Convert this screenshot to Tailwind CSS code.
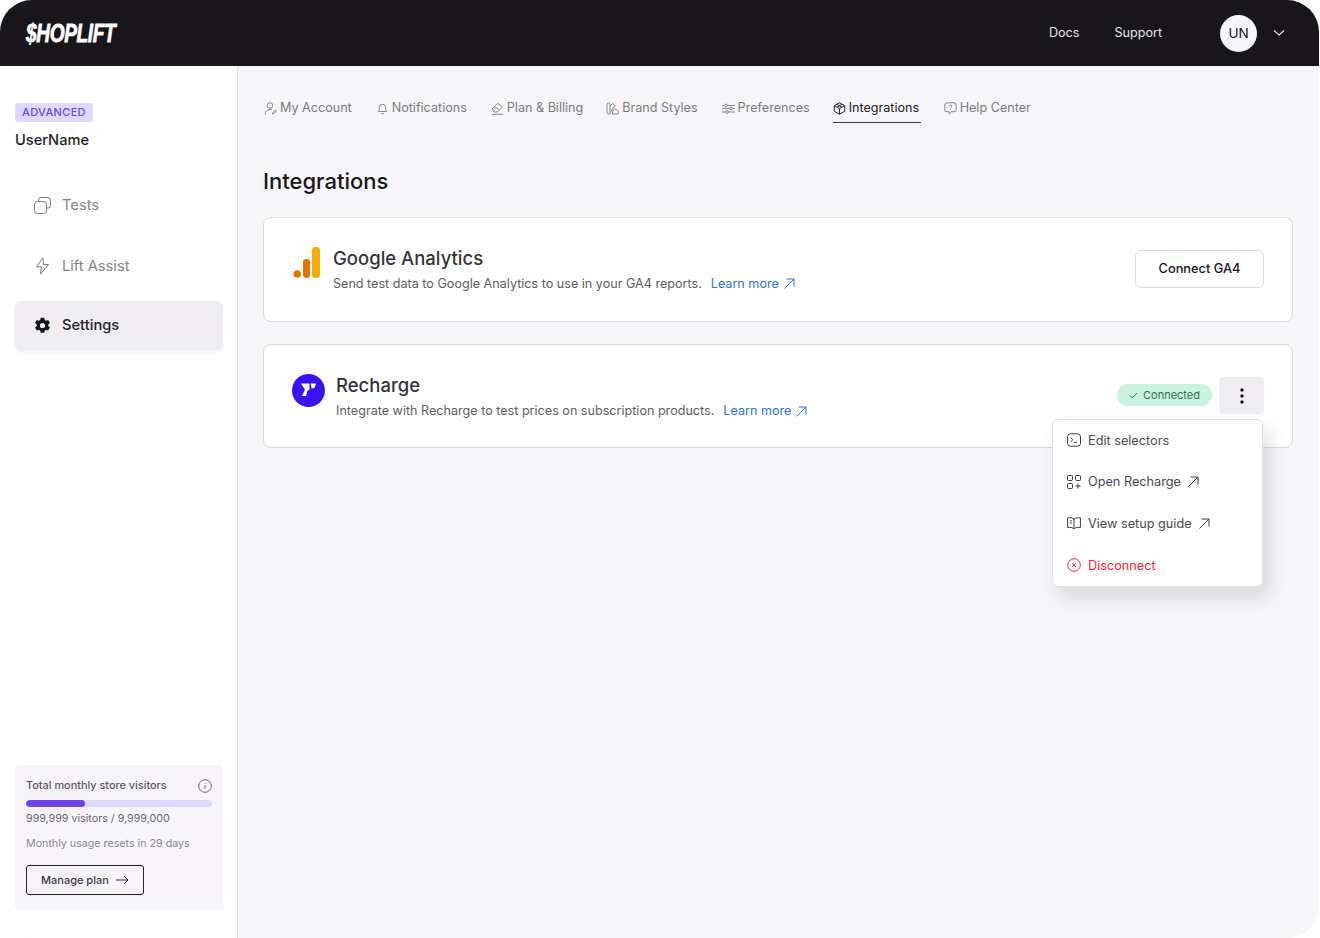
<!doctype html>
<html>
<head>
<meta charset="utf-8">
<script src="https://cdn.jsdelivr.net/npm/@tailwindcss/browser@4"></script>
</head>
<body class="bg-white font-['Inter',sans-serif] overflow-hidden">
<div class="w-[1319px] h-[938px] rounded-[32px] overflow-hidden flex flex-col bg-[#f6f5f8]">
  <header class="h-[66px] shrink-0 bg-[#18161a] flex items-center pl-[26px] pr-[34px]">
    <span class="text-white font-['Liberation_Sans',sans-serif] font-bold italic text-[26.500px] leading-none tracking-[-0.5px] origin-left scale-x-[0.72] w-[92px] whitespace-nowrap [-webkit-text-stroke:0.8px_white]">$HOPLIFT</span>
    <nav class="ml-auto flex items-center text-[12.600px] text-[#e6e4e9]">
      <span>Docs</span>
      <span class="ml-[35px]">Support</span>
    </nav>
    <div class="ml-[58px] w-[37px] h-[37px] rounded-full bg-[#f6f5f8] text-[#18161a] text-[13.500px] flex items-center justify-center">UN</div>
    <svg class="ml-[16px]" width="12" height="8" viewBox="0 0 12 8" fill="none" stroke="#e6e4e9" stroke-width="1.100"><path d="M1 1.500l5 4.500 5-4.500"/></svg>
  </header>
  <div class="flex-1 flex min-h-0">
    <aside class="w-[238px] shrink-0 bg-white border-r border-[#e2e0e5] flex flex-col pl-[15px] pr-[14px] pt-[37px] pb-[29px]">
      <span class="self-start h-[19px] px-[7px] rounded-[3px] bg-[#e0d9ff] text-[#6d43ec] text-[11px] font-medium tracking-[0.35px] flex items-center">ADVANCED</span>
      <div class="mt-[8px] text-[14.600px] leading-[20px] font-medium text-[#26242a]">UserName</div>
      <nav class="mt-[31px] flex flex-col gap-[13px] text-[14.700px]">
        <a class="h-[48px] flex items-center pl-[19px] gap-[11px] text-[#86848a]">
          <svg width="17" height="17" viewBox="0 0 17 17" fill="none" stroke="#7b797f" stroke-width="1"><rect x=".5" y="4.500" width="12" height="12" rx="3"/><path d="M4.500 4V3a2.500 2.500 0 0 1 2.500-2.500h6.500a3 3 0 0 1 3 3v5a2.500 2.500 0 0 1-2.500 2.500H13"/></svg>
          <span>Tests</span>
        </a>
        <a class="h-[48px] flex items-center pl-[20px] gap-[12px] text-[#86848a]">
          <svg width="15" height="18" viewBox="0 0 15 18" fill="none" stroke="#7b797f" stroke-width="1" stroke-linejoin="round"><path d="M8 .8 1.500 9.800h4.800L5.500 17l8-9.500H8.500z"/></svg>
          <span>Lift Assist</span>
        </a>
        <a class="h-[49px] rounded-[6px] bg-[#efedf1] shadow-[0_2px_3px_rgba(30,20,50,0.06)] flex items-center pl-[19px] gap-[11px] text-[#26242a] font-medium mt-[-2px]">
          <svg width="17" height="17" viewBox="0 0 24 24" fill="#18161a"><path fill-rule="evenodd" d="M9.500 1h5l.7 3.200 1.700 1 3.100-1 2.500 4.300-2.400 2.200v2l2.400 2.200-2.500 4.300-3.100-1-1.700 1-.7 3.200h-5l-.7-3.200-1.700-1-3.100 1-2.500-4.300 2.400-2.200v-2L1.400 8.500l2.500-4.300 3.100 1 1.700-1zM12 8.300a3.700 3.700 0 1 0 0 7.400 3.700 3.700 0 0 0 0-7.400z"/></svg>
          <span>Settings</span>
        </a>
      </nav>
      <section class="mt-auto h-[144px] rounded-[4px] bg-[#f7f5f9] shadow-[0_1px_2px_rgba(30,20,50,0.03)] px-[11px] pt-[12px]">
        <div class="flex items-center justify-between pr-0">
          <span class="text-[10.900px] leading-[16px] font-medium text-[#5a585e]">Total monthly store visitors</span>
          <svg class="mt-[1px]" width="14" height="14" viewBox="0 0 14 14" fill="none" stroke="#5a585e" stroke-width=".9"><circle cx="7" cy="7" r="6.300"/><path d="M7 6.300v3.500M7 4.200v.8"/></svg>
        </div>
        <div class="mt-[7px] h-[7px] rounded-full bg-[#e0d9ff] overflow-hidden"><div class="h-full w-[59px] rounded-full bg-[#6d43ec]"></div></div>
        <div class="mt-[4px] text-[10.700px] leading-[16px] text-[#6a686e]">999,999 visitors / 9,999,000</div>
        <div class="mt-[9px] text-[10.700px] leading-[16px] text-[#8a888e]">Monthly usage resets in 29 days</div>
        <button class="mt-[13px] h-[30px] w-[118px] rounded-[3px] border border-[#26242a] bg-[#f7f5f9] text-[11px] font-medium text-[#3c3a40] flex items-center pl-[14px] gap-[7px]">
          Manage plan
          <svg width="13" height="10" viewBox="0 0 13 10" fill="none" stroke="#26242a" stroke-width="1"><path d="M0 5h12M8 1l4 4-4 4"/></svg>
        </button>
      </section>
    </aside>
    <main class="flex-1 min-w-0 pl-[25px] pr-[26px] pt-[33px]">
      <nav class="flex items-start text-[12.600px] text-[#7d7b81] h-[24px] pl-[1px]">
        <a class="flex items-center gap-[3px] h-[19px]">
          <svg width="13" height="13" viewBox="0 0 13 13" fill="none" stroke="#7d7b81" stroke-width=".9"><circle cx="6" cy="3.500" r="2.800"/><path d="M1 12.500c0-3 2-5 5-5 .8 0 1.500.2 2 .4M8.500 12l.4-1.500 2.600-2.600 1 1-2.600 2.600z"/></svg>
          My Account
        </a>
        <a class="flex items-center gap-[3px] h-[19px] ml-[24px]">
          <svg width="13" height="13" viewBox="0 0 13 13" fill="none" stroke="#7d7b81" stroke-width=".9"><path d="M2.500 9.500c.8-1 .8-2 .8-4a3.200 3.200 0 0 1 6.400 0c0 2 0 3 .8 4zM5.200 11.700h2.600"/></svg>
          Notifications
        </a>
        <a class="flex items-center gap-[3px] h-[19px] ml-[24px]">
          <svg width="13" height="13" viewBox="0 0 13 13" fill="none" stroke="#7d7b81" stroke-width=".9"><path d="M1 7l5.500-5.500 5 3-5 5.500H3zM3.500 5l4.500 2.500M1 12.300h11"/></svg>
          Plan &amp; Billing
        </a>
        <a class="flex items-center gap-[3px] h-[19px] ml-[23px]">
          <svg width="13" height="13" viewBox="0 0 13 13" fill="none" stroke="#7d7b81" stroke-width=".9"><path d="M1 2.500a1.500 1.500 0 0 1 3 0V12H2.500A1.500 1.500 0 0 1 1 10.500zM4 4l2.500-2.500L9 3.500 4.500 10M6 12h5.500a1 1 0 0 0 1-1c0-3-4-5-5-3.500z"/></svg>
          Brand Styles
        </a>
        <a class="flex items-center gap-[3px] h-[19px] ml-[24px]">
          <svg width="13" height="13" viewBox="0 0 13 13" fill="none" stroke="#7d7b81" stroke-width=".9"><circle cx="4" cy="3.500" r="1.400"/><circle cx="9" cy="6.500" r="1.400"/><circle cx="5" cy="10" r="1.400"/><path d="M0 3.500h2.500M5.500 3.500H13M0 6.500h7.500M10.500 6.500H13M0 10h3.500M6.500 10H13"/></svg>
          Preferences
        </a>
        <a class="flex items-center gap-[3px] h-[24px] pb-[5px] ml-[23px] px-0 border-b border-[#3c3a40] text-[#26242a] box-border w-[88px]">
          <svg width="13" height="13" viewBox="0 0 13 13" fill="none" stroke="#26242a" stroke-width="1"><path d="M6.500.8l5.200 2.900v5.600l-5.200 2.900-5.200-2.900V3.700zM1.300 3.700l5.200 3 5.200-3M6.500 6.700v5.500M3.900 2.300l5.200 3M9.100 2.300l-5.200 3"/></svg>
          Integrations
        </a>
        <a class="flex items-center gap-[3px] h-[19px] ml-[23px]">
          <svg width="13" height="13" viewBox="0 0 13 13" fill="none" stroke="#7d7b81" stroke-width=".9"><path d="M3 .8h7A2.200 2.200 0 0 1 12.200 3v4.500A2.200 2.200 0 0 1 10 9.700H7.500L5 12V9.700H3A2.200 2.200 0 0 1 .8 7.500V3A2.200 2.200 0 0 1 3 .8zM6.500 6.800v.7M5.200 3.800c.4-1 2.700-1 2.700.4 0 1-1.400 1-1.400 1.900"/></svg>
          Help Center
        </a>
      </nav>
      <h1 class="mt-[42px] text-[22px] leading-[32px] font-medium text-[#18161a]">Integrations</h1>
      <div class="mt-[20px] flex flex-col gap-[22px]">
        <section class="h-[105px] rounded-[8px] border border-[#dcdadf] bg-white flex items-center pl-[29px] pr-[28px]">
          <svg class="shrink-0 mt-[-14px]" width="28" height="31" viewBox="0 0 28 31"><rect x="19" y="0" width="8" height="31" rx="3.500" fill="#f9ab00"/><rect x="10" y="12" width="7" height="19" rx="3.500" fill="#e37400"/><circle cx="4.200" cy="27" r="3.700" fill="#e37400"/></svg>
          <div class="ml-[12px] mt-[-1px]">
            <div class="text-[18.500px] leading-[24px] font-medium text-[#35333a]">Google Analytics</div>
            <div class="mt-[5px] text-[12.600px] leading-[18px] text-[#5f5d63] flex items-center">Send test data to Google Analytics to use in your GA4 reports.<a class="ml-[9px] text-[#2f6fed] flex items-center gap-[5px]">Learn more
              <svg width="11" height="11" viewBox="0 0 11 11" fill="none" stroke="#2f6fed" stroke-width="1"><path d="M.5 10.500 10 1M2.500 1H10v7.500"/></svg></a></div>
          </div>
          <button class="ml-auto w-[129px] h-[38px] rounded-[6px] border border-[#dcdadf] bg-white text-[12.800px] font-medium text-[#18161a] mt-[-2px]">Connect GA4</button>
        </section>
        <section class="relative h-[104px] rounded-[8px] border border-[#dcdadf] bg-white flex pl-[28px] pr-[28px] pt-[28px]">
          <svg class="shrink-0 mt-[1px]" width="33" height="33" viewBox="0 0 33 33"><circle cx="16.500" cy="16.500" r="16.500" fill="#3a12f5"/><path d="M9 9.500h8.500V16l-2 .5-1.500 5.500h-4l3-6.500zM18.800 9.500h5.200l-1.500 4.500-3 .5z" fill="#fff"/></svg>
          <div class="ml-[11px]">
            <div class="text-[18.500px] leading-[24px] font-medium text-[#35333a]">Recharge</div>
            <div class="mt-[5px] text-[12.600px] leading-[18px] text-[#5f5d63] flex items-center">Integrate with Recharge to test prices on subscription products.<a class="ml-[9px] text-[#2f6fed] flex items-center gap-[5px]">Learn more
              <svg width="11" height="11" viewBox="0 0 11 11" fill="none" stroke="#2f6fed" stroke-width="1"><path d="M.5 10.500 10 1M2.500 1H10v7.500"/></svg></a></div>
          </div>
          <div class="ml-auto flex items-start gap-[7px] mt-[4px]">
            <span class="mt-[7px] h-[22px] w-[95px] rounded-full bg-[#c9f2e1] text-[#2d705a] text-[11px] flex items-center justify-center gap-[5px]">
              <svg width="9" height="7" viewBox="0 0 9 7" fill="none" stroke="#2d705a" stroke-width="1"><path d="M1 3.500l2.300 2.300L8 1"/></svg>
              Connected
            </span>
            <button class="w-[45px] h-[37px] rounded-[4px] bg-[#efedf1] flex items-center justify-center">
              <svg width="4" height="16" viewBox="0 0 4 16" fill="#18161a"><circle cx="2" cy="2" r="1.700"/><circle cx="2" cy="8" r="1.700"/><circle cx="2" cy="14" r="1.700"/></svg>
            </button>
          </div>
          <div class="absolute left-[788px] top-[74px] w-[211px] h-[168px] rounded-[6px] bg-white border border-[#e2e0e5] shadow-[6px_10px_18px_rgba(30,20,50,0.13)] text-[12.700px] text-[#4c4a50] pl-[14px] flex flex-col">
            <a class="h-[41px] flex items-center gap-[7px]">
              <svg width="14" height="14" viewBox="0 0 14 14" fill="none" stroke="#3c3a40" stroke-width="1"><rect x=".5" y=".8" width="13" height="12.400" rx="3"/><path d="M3.500 4.500 5.800 6.800 3.500 9M7 9.300h3"/></svg>
              Edit selectors
            </a>
            <a class="h-[42px] flex items-center gap-[7px]">
              <svg width="14" height="14" viewBox="0 0 14 14" fill="none" stroke="#3c3a40" stroke-width="1"><rect x=".5" y=".5" width="5" height="5" rx="1"/><rect x="8.500" y=".5" width="5" height="5" rx="1"/><rect x=".5" y="8.500" width="5" height="5" rx="1"/><path d="M11 8.500v5M8.500 11h5"/></svg>
              Open Recharge
              <svg class="ml-[0px]" width="11" height="11" viewBox="0 0 11 11" fill="none" stroke="#3c3a40" stroke-width="1"><path d="M.5 10.500 10 1M2.500 1H10v7.500"/></svg>
            </a>
            <a class="h-[42px] flex items-center gap-[7px]">
              <svg width="14" height="14" viewBox="0 0 14 14" fill="none" stroke="#3c3a40" stroke-width="1"><path d="M7 3C5.500 1.800 3 1.500.6 1.800V11.500C3 11.200 5.500 11.500 7 12.700c1.500-1.200 4-1.500 6.400-1.200V1.800C11 1.500 8.500 1.800 7 3zM7 3v9.700M2.800 4.800h2M2.800 7h2"/></svg>
              View setup guide
              <svg class="ml-[0px]" width="11" height="11" viewBox="0 0 11 11" fill="none" stroke="#3c3a40" stroke-width="1"><path d="M.5 10.500 10 1M2.500 1H10v7.500"/></svg>
            </a>
            <a class="h-[42px] flex items-center gap-[7px] text-[#f5233f]">
              <svg width="14" height="14" viewBox="0 0 14 14" fill="none" stroke="#f5233f" stroke-width="1"><circle cx="7" cy="7" r="6.300"/><path d="M5.200 5.200l3.600 3.600M8.800 5.200 5.200 8.800"/></svg>
              Disconnect
            </a>
          </div>
        </section>
      </div>
    </main>
  </div>
</div>
</body>
</html>
